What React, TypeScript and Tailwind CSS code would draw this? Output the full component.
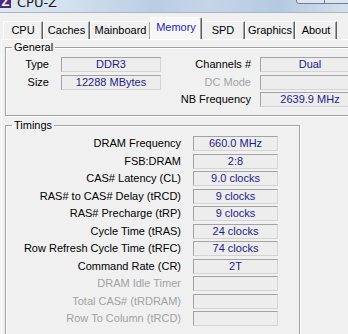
import type { ReactNode } from 'react'

type Row = { label: string; value?: string; disabled?: boolean }

const tabs = [
  { name: 'CPU', w: 'w-[40px]' },
  { name: 'Caches', w: 'w-[47px]' },
  { name: 'Mainboard', w: 'w-[61px]' },
  { name: 'Memory', w: 'w-[52px]', active: true },
  { name: 'SPD', w: 'w-[44px]' },
  { name: 'Graphics', w: 'w-[50px]' },
  { name: 'About', w: 'w-[42px]' },
]

const timings: Row[] = [
  { label: 'DRAM Frequency', value: '660.0 MHz' },
  { label: 'FSB:DRAM', value: '2:8' },
  { label: 'CAS# Latency (CL)', value: '9.0 clocks' },
  { label: 'RAS# to CAS# Delay (tRCD)', value: '9 clocks' },
  { label: 'RAS# Precharge (tRP)', value: '9 clocks' },
  { label: 'Cycle Time (tRAS)', value: '24 clocks' },
  { label: 'Row Refresh Cycle Time (tRFC)', value: '74 clocks' },
  { label: 'Command Rate (CR)', value: '2T' },
  { label: 'DRAM Idle Timer', disabled: true },
  { label: 'Total CAS# (tRDRAM)', disabled: true },
  { label: 'Row To Column (tRCD)', disabled: true },
]

function Field({ value, w }: { value?: string; w: string }) {
  return (
    <div
      className={`${w} h-[15px] flex items-center justify-center border border-t-[#a3a3a3] border-l-[#a3a3a3] border-b-[#d4d4d4] border-r-[#d4d4d4] bg-[#ededed] text-[#1c1c8a] leading-none`}
    >
      {value}
    </div>
  )
}

function Label({ children, disabled, w }: { children: ReactNode; disabled?: boolean; w: string }) {
  return (
    <div className={`${w} text-right leading-none whitespace-nowrap ${disabled ? 'text-[#a2a2a2]' : 'text-black'}`}>
      {children}
    </div>
  )
}

function GroupBox({ title, className, children }: { title: string; className: string; children: ReactNode }) {
  return (
    <fieldset className={`border border-[#a0a0a0] shadow-[inset_1px_1px_0_#ffffff,1px_1px_0_#ffffff] ${className}`}>
      <legend className="ml-[6px] px-[2px] leading-[13px] text-black">{title}</legend>
      {children}
    </fieldset>
  )
}

export default function App() {
  return (
    <div className="w-[348px] h-[334px] overflow-hidden bg-[#f0f0f0] text-[11px] font-['Liberation_Sans',Arial,sans-serif] flex flex-col">
      {/* Title bar (cut off by the crop) */}
      <div className="h-[12px] shrink-0 overflow-hidden flex items-start bg-[linear-gradient(90deg,#dfe8f1_0%,#d3e0ee_20%,#b9cde3_45%,#c6d6e8_60%,#b4c9e0_80%,#d4e0ec_100%)]">
        <div className="w-[11px] h-[16px] -mt-[8px] bg-[#4d2a7e] flex items-end justify-center text-white font-bold text-[13px] leading-none">
          Z
        </div>
        <span className="ml-[6px] -mt-[5px] text-[13px] leading-[16px] text-[#1b1b1b] font-['DejaVu_Sans',sans-serif]">
          CPU-Z
        </span>
        <div className="ml-auto -mt-[14px] mr-[-4px] w-[56px] h-[18px] flex rounded-[3px] border border-[#6f7f92] bg-[#dbe5ef]">
          <div className="w-[28px] border-r border-[#6f7f92]" />
        </div>
      </div>
      <div className="h-px shrink-0 bg-[#a9b6c4]" />

      {/* Tabs */}
      <div className="shrink-0 flex items-end pl-[3px] pt-[4px]">
        {tabs.map((t) =>
          t.active ? (
            <div
              key={t.name}
              className={`${t.w} h-[22px] -mx-[1px] z-10 flex items-center justify-center pb-[2px] border-t border-l border-white border-r border-r-[#5f5f5f] shadow-[inset_-1px_0_0_#a0a0a0] bg-[#f7f7f7] text-[#2323c4] rounded-t-[2px]`}
            >
              {t.name}
            </div>
          ) : (
            <div
              key={t.name}
              className={`${t.w} h-[18px] flex items-center justify-center border-t border-l border-white border-r border-r-[#5f5f5f] shadow-[inset_-1px_0_0_#a0a0a0] text-black`}
            >
              {t.name}
            </div>
          ),
        )}
      </div>

      {/* Page */}
      <div className="flex-1 ml-[1px] border-t border-l border-white flex flex-col">
        <GroupBox title="General" className="ml-[3px] mt-[1px] w-[360px] pt-[3px] pb-[8px]">
          <div className="grid grid-cols-[43px_112px_90px_109px] gap-y-[2.5px] items-center">
            <Label w="w-[43px]">Type</Label>
            <div className="pl-[12px]"><Field w="w-[100px]" value="DDR3" /></div>
            <Label w="w-[90px]">Channels #</Label>
            <div className="pl-[9px]"><Field w="w-[100px]" value="Dual" /></div>

            <Label w="w-[43px]">Size</Label>
            <div className="pl-[12px]"><Field w="w-[100px]" value="12288 MBytes" /></div>
            <Label w="w-[90px]" disabled>DC Mode</Label>
            <div className="pl-[9px]"><Field w="w-[100px]" /></div>

            <div />
            <div />
            <Label w="w-[90px]">NB Frequency</Label>
            <div className="pl-[9px]"><Field w="w-[100px]" value="2639.9 MHz" /></div>
          </div>
        </GroupBox>

        <GroupBox title="Timings" className="ml-[3px] mt-[3px] w-[295px] pt-[4px] pb-[20px]">
          <div className="flex flex-col gap-y-[2.5px]">
            {timings.map((r) => (
              <div key={r.label} className="flex items-center">
                <Label w="w-[175px]" disabled={r.disabled}>{r.label}</Label>
                <div className="ml-[12px]"><Field w="w-[85px]" value={r.value} /></div>
              </div>
            ))}
          </div>
        </GroupBox>
      </div>
    </div>
  )
}
